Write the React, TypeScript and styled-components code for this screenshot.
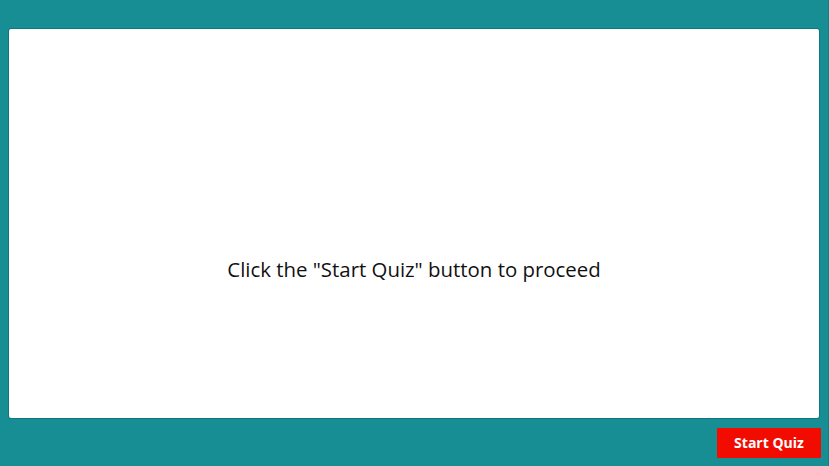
import React from "react";
import styled, { createGlobalStyle } from "styled-components";

const Global = createGlobalStyle`
  html, body { margin: 0; padding: 0; }
  body { background: #178e93; font-family: "Open Sans", "Noto Sans", sans-serif; }
`;

const Frame = styled.div`
  width: 829px;
  height: 466px;
  box-sizing: border-box;
  background: #178e93;
  display: flex;
  flex-direction: column;
  padding: 29px 9px 0 9px;
  border-right: 1px solid #137e83;
`;

const Stage = styled.main`
  height: 389px;
  box-sizing: border-box;
  background: #ffffff;
  border-radius: 2px;
  box-shadow: 0 0 0 1px rgba(0, 80, 85, 0.35);
  display: flex;
  justify-content: center;
  align-items: flex-start;
  padding-top: 227px;
`;

const Message = styled.p`
  margin: 0;
  font-size: 20.4px;
  line-height: 26px;
  color: #111111;
`;

const Footer = styled.footer`
  flex: 1;
  display: flex;
  justify-content: flex-end;
  align-items: flex-start;
  padding-top: 10px;
`;

const StartButton = styled.button`
  width: 104px;
  height: 30px;
  margin-right: -2px;
  border: none;
  border-radius: 1px;
  background: #f20c00;
  color: #ffffff;
  font-family: "Open Sans", "Noto Sans", sans-serif;
  font-weight: 700;
  font-size: 14px;
  line-height: 28px;
  cursor: pointer;
  padding: 0;
`;

export default function App() {
  return (
    <>
      <Global />
      <Frame>
        <Stage>
          <Message>Click the "Start Quiz" button to proceed</Message>
        </Stage>
        <Footer>
          <StartButton>Start Quiz</StartButton>
        </Footer>
      </Frame>
    </>
  );
}
